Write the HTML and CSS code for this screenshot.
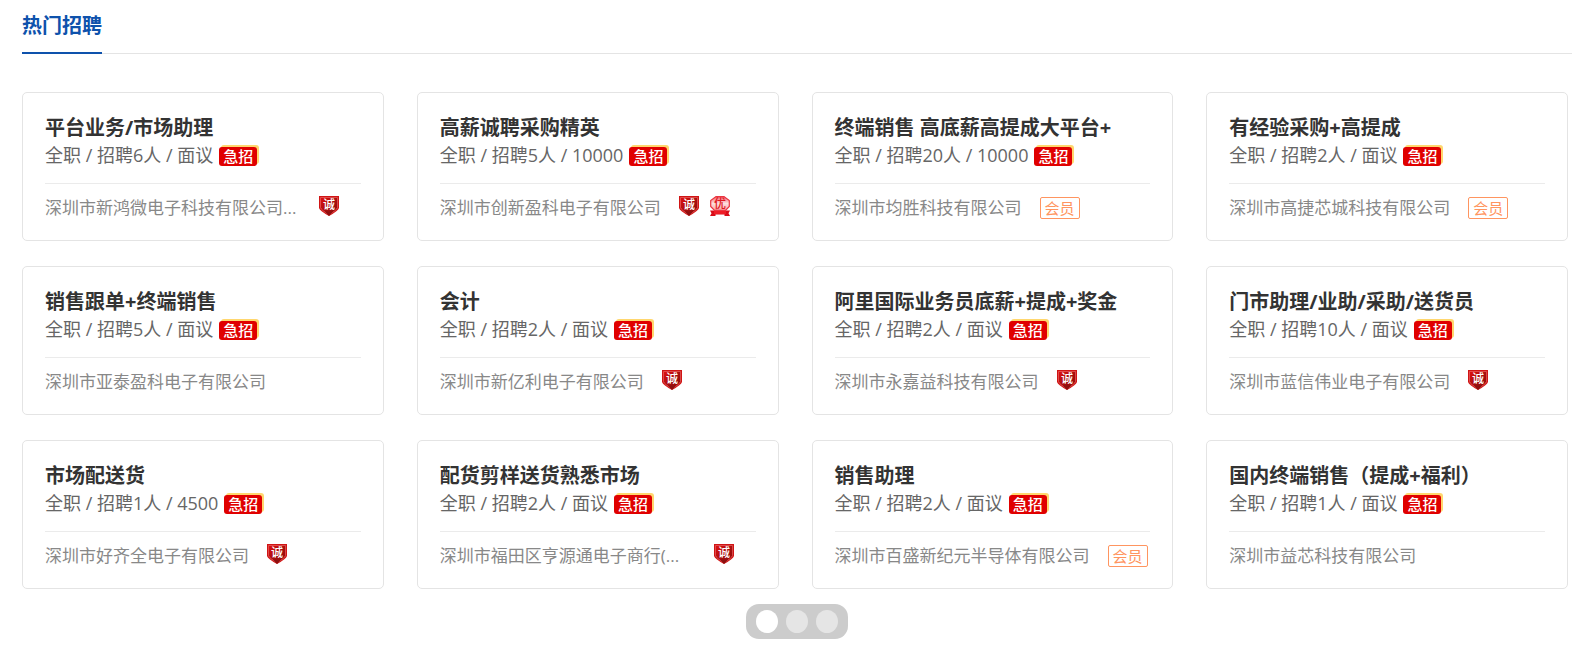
FILE: index.html
```html
<!DOCTYPE html>
<html lang="zh-CN">
<head>
<meta charset="utf-8">
<title>热门招聘</title>
<link rel="stylesheet" href="styles.css">
</head>
<body>
<svg class="gradients" aria-hidden="true">
  <defs>
    <linearGradient id="shield-fill" x1="0" y1="0" x2="1" y2="1">
      <stop offset="0" stop-color="#e01010"/>
      <stop offset="0.5" stop-color="#a80f0f"/>
      <stop offset="1" stop-color="#8c0808"/>
    </linearGradient>
    <linearGradient id="medal-fill" x1="0" y1="0" x2="0" y2="1">
      <stop offset="0" stop-color="#f4606a"/>
      <stop offset="0.5" stop-color="#fde0e0"/>
      <stop offset="1" stop-color="#f8a0a4"/>
    </linearGradient>
  </defs>
</svg>
<svg class="symbols" aria-hidden="true">
  <symbol id="shield" viewBox="0 0 20 20">
    <path d="M0 0H20V12Q19 15 10 20Q1 15 0 12Z" fill="#d01414"/>
    <path d="M1.500 1.500H18.500V11.500Q17.500 14.500 10 18.500Q2.500 14.500 1.500 11.500Z" fill="url(#shield-fill)" stroke="#ef7070" stroke-width="0.600"/>
    <path d="M6 15.500H14L10 20Z" fill="#8c1010"/>
    <text class="icon-char" x="10" y="13" text-anchor="middle" fill="#fff">诚</text>
  </symbol>
  <symbol id="medal" viewBox="0 0 20 20">
    <path d="M0 14.500H4V13H16V14.500H20L18.500 17.200L20 20H14.500V18.500H5.500V20H0L1.500 17.200Z" fill="#d80c18"/>
    <path d="M6 0.600H14L19.300 4.500V10.500L15.500 14.400H4.500L0.700 10.500V4.500Z" fill="url(#medal-fill)" stroke="#ea3540" stroke-width="1.200"/>
    <path d="M4 15H16V18H4Z" fill="#ee1c26"/>
    <text class="icon-char" x="10" y="12" text-anchor="middle" fill="#e01822">优</text>
  </symbol>
</svg>

<section class="jobs">
  <header class="jobs-head"><h2 class="jobs-title">热门招聘</h2></header>

  <div class="job-grid">
    <article class="job">
      <h3 class="job-name">平台业务/市场助理</h3>
      <p class="job-meta">全职 / 招聘6人 / 面议 <span class="urgent">急招</span></p>
      <div class="job-company"><a class="company company-clipped" href="#">深圳市新鸿微电子科技有限公司...</a><svg class="icon" role="img" aria-label="诚信"><use href="#shield"/></svg></div>
    </article>
    <article class="job">
      <h3 class="job-name">高薪诚聘采购精英</h3>
      <p class="job-meta">全职 / 招聘5人 / 10000 <span class="urgent">急招</span></p>
      <div class="job-company"><a class="company" href="#">深圳市创新盈科电子有限公司</a><svg class="icon" role="img" aria-label="诚信"><use href="#shield"/></svg><svg class="icon" role="img" aria-label="优质"><use href="#medal"/></svg></div>
    </article>
    <article class="job">
      <h3 class="job-name">终端销售 高底薪高提成大平台+</h3>
      <p class="job-meta">全职 / 招聘20人 / 10000 <span class="urgent">急招</span></p>
      <div class="job-company"><a class="company" href="#">深圳市均胜科技有限公司</a><span class="member">会员</span></div>
    </article>
    <article class="job">
      <h3 class="job-name">有经验采购+高提成</h3>
      <p class="job-meta">全职 / 招聘2人 / 面议 <span class="urgent">急招</span></p>
      <div class="job-company"><a class="company" href="#">深圳市高捷芯城科技有限公司</a><span class="member">会员</span></div>
    </article>

    <article class="job">
      <h3 class="job-name">销售跟单+终端销售</h3>
      <p class="job-meta">全职 / 招聘5人 / 面议 <span class="urgent">急招</span></p>
      <div class="job-company"><a class="company" href="#">深圳市亚泰盈科电子有限公司</a></div>
    </article>
    <article class="job">
      <h3 class="job-name">会计</h3>
      <p class="job-meta">全职 / 招聘2人 / 面议 <span class="urgent">急招</span></p>
      <div class="job-company"><a class="company" href="#">深圳市新亿利电子有限公司</a><svg class="icon" role="img" aria-label="诚信"><use href="#shield"/></svg></div>
    </article>
    <article class="job">
      <h3 class="job-name">阿里国际业务员底薪+提成+奖金</h3>
      <p class="job-meta">全职 / 招聘2人 / 面议 <span class="urgent">急招</span></p>
      <div class="job-company"><a class="company" href="#">深圳市永嘉益科技有限公司</a><svg class="icon" role="img" aria-label="诚信"><use href="#shield"/></svg></div>
    </article>
    <article class="job">
      <h3 class="job-name">门市助理/业助/采助/送货员</h3>
      <p class="job-meta">全职 / 招聘10人 / 面议 <span class="urgent">急招</span></p>
      <div class="job-company"><a class="company" href="#">深圳市蓝信伟业电子有限公司</a><svg class="icon" role="img" aria-label="诚信"><use href="#shield"/></svg></div>
    </article>

    <article class="job">
      <h3 class="job-name">市场配送货</h3>
      <p class="job-meta">全职 / 招聘1人 / 4500 <span class="urgent">急招</span></p>
      <div class="job-company"><a class="company" href="#">深圳市好齐全电子有限公司</a><svg class="icon" role="img" aria-label="诚信"><use href="#shield"/></svg></div>
    </article>
    <article class="job">
      <h3 class="job-name">配货剪样送货熟悉市场</h3>
      <p class="job-meta">全职 / 招聘2人 / 面议 <span class="urgent">急招</span></p>
      <div class="job-company"><a class="company company-clipped" href="#">深圳市福田区亨源通电子商行(...</a><svg class="icon" role="img" aria-label="诚信"><use href="#shield"/></svg></div>
    </article>
    <article class="job">
      <h3 class="job-name">销售助理</h3>
      <p class="job-meta">全职 / 招聘2人 / 面议 <span class="urgent">急招</span></p>
      <div class="job-company"><a class="company" href="#">深圳市百盛新纪元半导体有限公司</a><span class="member">会员</span></div>
    </article>
    <article class="job">
      <h3 class="job-name">国内终端销售（提成+福利）</h3>
      <p class="job-meta">全职 / 招聘1人 / 面议 <span class="urgent">急招</span></p>
      <div class="job-company"><a class="company" href="#">深圳市益芯科技有限公司</a></div>
    </article>
  </div>

  <nav class="pager" aria-label="分页">
    <button class="dot dot-active" type="button" aria-label="第1页"></button>
    <button class="dot" type="button" aria-label="第2页"></button>
    <button class="dot" type="button" aria-label="第3页"></button>
  </nav>
</section>
</body>
</html>
```
FILE: styles.css
```css
* {
  box-sizing: border-box;
}

body {
  margin: 0;
  background: #fff;
  color: #333;
  font-family: "Open Sans", "Noto Sans CJK SC", sans-serif;
}

.gradients {
  position: absolute;
  width: 0;
  height: 0;
}

.symbols {
  display: none;
}

.jobs {
  padding: 0 15px 0 22px;
}

.jobs-head {
  display: flex;
  height: 54px;
  box-shadow: inset 0 -1px #e4e4e4;
}

.jobs-title {
  margin: 0;
  border-bottom: 2px solid #0e52ac;
  color: #0e52ac;
  font-size: 20px;
  line-height: 52px;
}

.job-grid {
  display: grid;
  grid-template-columns: repeat(4, minmax(0, 1fr));
  gap: 25px 33px;
  margin: 38px 4px 15px 0;
}

.job {
  padding: 21px 22px 8px;
  border: 1px solid #e4e4e4;
  border-radius: 5px;
  white-space: nowrap;
}

.job-name {
  margin: 0;
  font-size: 20px;
  line-height: 27px;
}

.job-meta {
  display: flex;
  align-items: center;
  gap: 6px;
  height: 28px;
  margin: 0 0 14px;
  color: #666;
  font-size: 18px;
  line-height: 28px;
}

.urgent {
  width: 38px;
  height: 19px;
  margin-top: 2px;
  border-radius: 3px;
  background: #e00000;
  box-shadow: 2px -2px #ffd76e;
  color: #fff;
  font-size: 15px;
  font-weight: 500;
  line-height: 19px;
  text-align: center;
}

.job-company {
  display: flex;
  align-items: center;
  height: 49px;
  border-top: 1px solid #ebebeb;
}

.company {
  margin-right: 18px;
  color: #888;
  font-size: 17px;
  line-height: 48px;
  text-decoration: none;
}

.company-clipped {
  width: 256px;
}

.icon {
  width: 20px;
  height: 20px;
  margin: 0 11px 4px 0;
}

.icon-char {
  font-family: "Noto Sans CJK SC", sans-serif;
  font-size: 12px;
  font-weight: 500;
}

.member {
  width: 40px;
  height: 22px;
  border: 1px solid #ff9560;
  border-radius: 2px;
  color: #ff9560;
  font-size: 15px;
  line-height: 20px;
  text-align: center;
}

.pager {
  display: flex;
  gap: 8px;
  width: fit-content;
  margin: 0 auto;
  padding: 6px 10px;
  border-radius: 13px;
  background: #ccc;
}

.dot {
  width: 22px;
  height: 23px;
  padding: 0;
  border: 0;
  border-radius: 50%;
  background: #e5e5e5;
}

.dot-active {
  background: #fff;
}
```
